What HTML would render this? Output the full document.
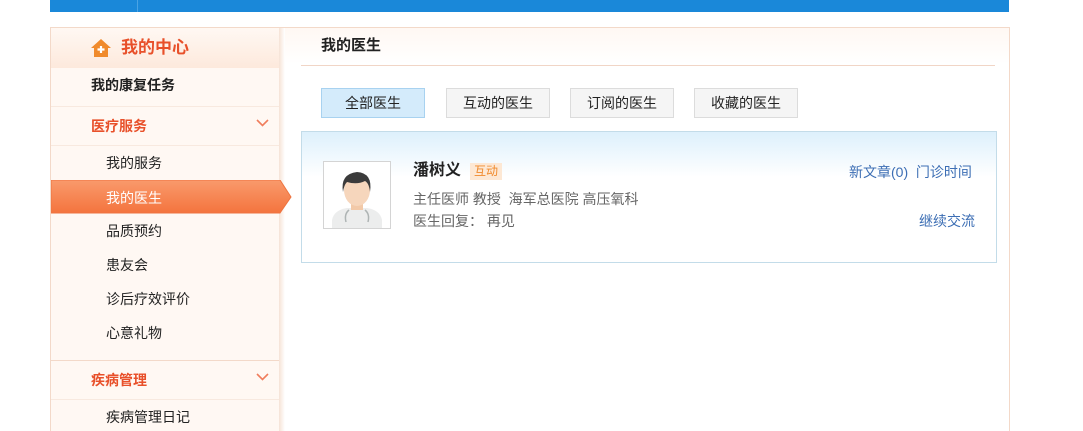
<!DOCTYPE html>
<html style="width:1083px;height:431px;overflow:hidden"><head><meta charset="utf-8"><style>
*{margin:0;padding:0;box-sizing:border-box}
body{width:1083px;height:431px;overflow:hidden;background:#fff;font-family:"Liberation Sans","Noto Sans CJK SC",sans-serif;font-size:14px;color:#222;position:relative}
.a{position:absolute}
.t{position:absolute;white-space:nowrap;line-height:20px}
</style></head><body>
<div class="a" style="left:50px;top:0;width:959px;height:12px;background:#1a88d9"></div>
<div class="a" style="left:137px;top:0;width:1px;height:12px;background:#4aa3e4"></div>
<div class="a" style="left:50px;top:27px;width:960px;height:404px;border:1px solid #f3d9c9;border-bottom:none"></div>
<!-- sidebar -->
<div class="a" style="left:51px;top:28px;width:228px;height:403px;background:#fff8f3"></div>
<div class="a" style="left:279px;top:28px;width:6px;height:403px;background:linear-gradient(90deg,#f6e3d6,#fff)"></div>
<div class="a" style="left:51px;top:28px;width:228px;height:40px;background:linear-gradient(#fff8f3,#fde9dc)"></div>
<svg class="a" style="left:90px;top:38px" width="22" height="20" viewBox="0 0 22 20"><path d="M11 1L1 10h3v9h14v-9h3z" fill="#f08a2c"/><path d="M11 8v7M7.5 11.5h7" stroke="#fff" stroke-width="2.2"/></svg>
<div class="t" style="left:121px;top:38px;font-size:17px;font-weight:bold;color:#e8502a">我的中心</div>
<div class="t" style="left:91px;top:75px;font-weight:bold">我的康复任务</div>
<div class="a" style="left:51px;top:106px;width:228px;height:1px;background:#f8e9df"></div>
<div class="t" style="left:91px;top:116px;color:#e8502a;font-weight:bold">医疗服务</div>
<svg class="a" style="left:256px;top:119px" width="13" height="8"><path d="M1 1l5.5 5.5L12 1" stroke="#f07d5c" stroke-width="1.6" fill="none"/></svg>
<div class="a" style="left:51px;top:145px;width:228px;height:1px;background:#f8e9df"></div>
<div class="t" style="left:106px;top:153px">我的服务</div>
<svg class="a" style="left:51px;top:180px" width="241" height="34"><defs><linearGradient id="g" x1="0" y1="0" x2="0" y2="1"><stop offset="0" stop-color="#f99a6c"/><stop offset="1" stop-color="#f4743e"/></linearGradient></defs><path d="M0 0H229L240 17L229 33H0Z" fill="url(#g)" stroke="#ee7440"/></svg>
<div class="t" style="left:106px;top:188px;color:#fff">我的医生</div>
<div class="t" style="left:106px;top:221px">品质预约</div>
<div class="t" style="left:106px;top:255px">患友会</div>
<div class="t" style="left:106px;top:289px">诊后疗效评价</div>
<div class="t" style="left:106px;top:323px">心意礼物</div>
<div class="a" style="left:51px;top:360px;width:228px;height:1px;background:#f3d9c9"></div>
<div class="t" style="left:91px;top:370px;color:#e8502a;font-weight:bold">疾病管理</div>
<svg class="a" style="left:256px;top:373px" width="13" height="8"><path d="M1 1l5.5 5.5L12 1" stroke="#f07d5c" stroke-width="1.6" fill="none"/></svg>
<div class="a" style="left:51px;top:399px;width:228px;height:1px;background:#f8e9df"></div>
<div class="t" style="left:106px;top:407px">疾病管理日记</div>
<!-- content -->
<div class="a" style="left:285px;top:28px;width:724px;height:36px;background:linear-gradient(#fff8f3,#fff)"></div>
<div class="t" style="left:321px;top:36px;font-size:15px;font-weight:bold">我的医生</div>
<div class="a" style="left:301px;top:65px;width:694px;height:1px;background:#f1d5c6"></div>
<div class="t" style="left:321px;top:88px;width:104px;height:30px;line-height:28px;text-align:center;background:#d4ebfb;border:1px solid #a8d2f0">全部医生</div>
<div class="t" style="left:446px;top:88px;width:104px;height:30px;line-height:28px;text-align:center;background:#f5f5f5;border:1px solid #dcdcdc">互动的医生</div>
<div class="t" style="left:570px;top:88px;width:104px;height:30px;line-height:28px;text-align:center;background:#f5f5f5;border:1px solid #dcdcdc">订阅的医生</div>
<div class="t" style="left:694px;top:88px;width:104px;height:30px;line-height:28px;text-align:center;background:#f5f5f5;border:1px solid #dcdcdc">收藏的医生</div>
<div class="a" style="left:301px;top:131px;width:696px;height:132px;border:1px solid #c3dce9;background:linear-gradient(#ddf0fc,#fff 45px)"></div>
<div class="a" style="left:323px;top:161px;width:68px;height:68px;border:1px solid #d4d4d4;background:#fff;overflow:hidden">
<svg width="66" height="66" viewBox="0 0 66 66"><path d="M8 66v-8q2-10 15-12h20q13 2 15 12v8z" fill="#eceded"/><rect x="27" y="36" width="12" height="12" fill="#f2c9a8"/><ellipse cx="33" cy="28" rx="13" ry="16" fill="#f6d6bc"/><path d="M19 30q-3-18 14-20q16 1 13 20q-1-9-5-11q-8 4-18 1q-3 3-4 10z" fill="#3b3b3b"/><path d="M25 48q-5 4-3 12M41 48q5 4 3 12" stroke="#aeb4b4" stroke-width="1.5" fill="none"/></svg></div>
<div class="t" style="left:413px;top:161px;font-size:16px;font-weight:bold">潘树义</div>
<div class="t" style="left:470px;top:163px;height:17px;line-height:17px;padding:0 4px;font-size:12px;color:#f08a2c;background:#fde8d4">互动</div>
<div class="t" style="left:413px;top:189px;color:#666">主任医师 教授&nbsp; 海军总医院 高压氧科</div>
<div class="t" style="left:413px;top:211px;color:#666">医生回复： 再见</div>
<div class="t" style="left:849px;top:162px;color:#3c6eb4">新文章(0)&nbsp; 门诊时间</div>
<div class="t" style="left:919px;top:211px;color:#3c6eb4">继续交流</div>
</body></html>
